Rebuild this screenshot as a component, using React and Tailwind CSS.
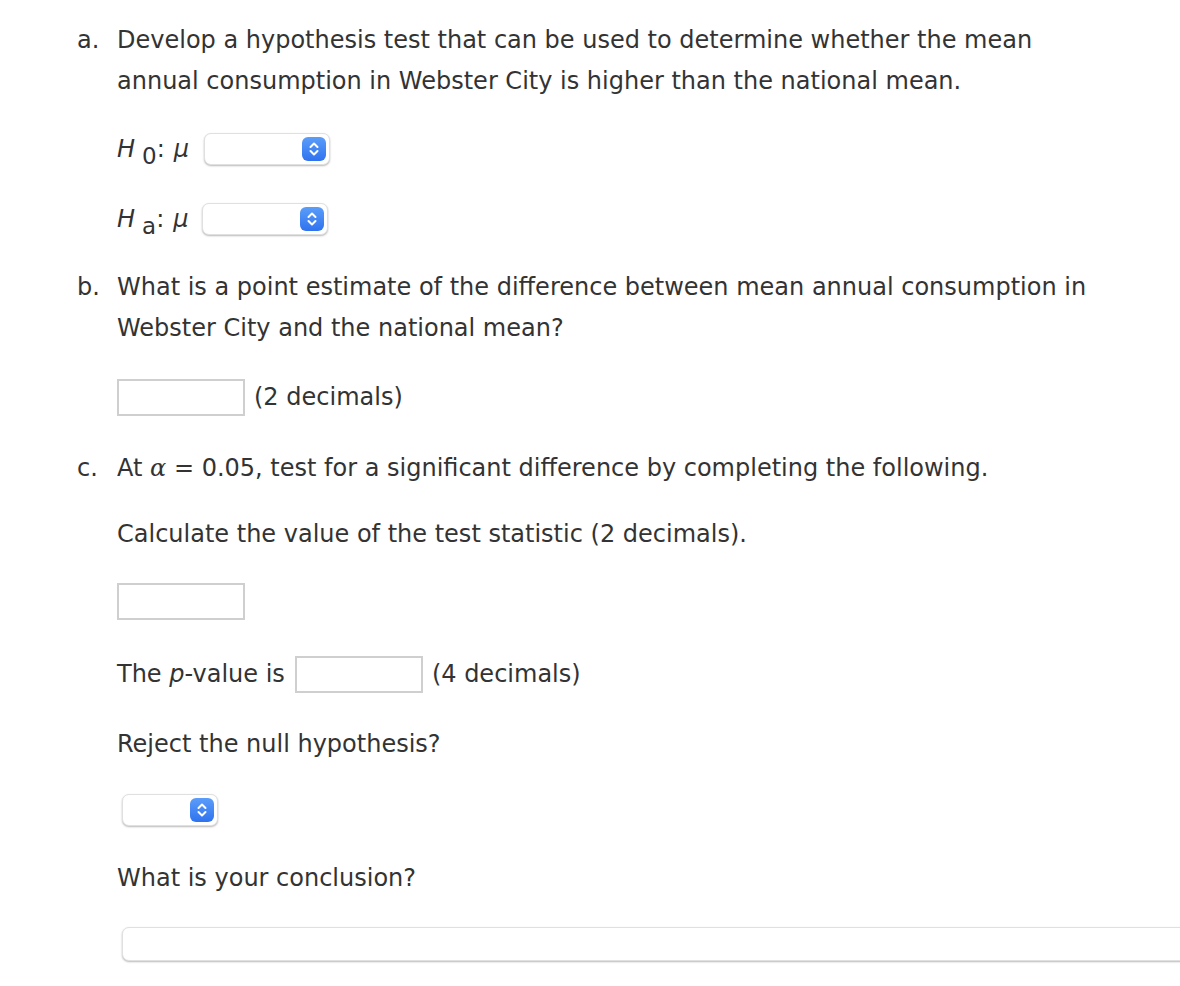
const Stepper = () => (
  <span className="absolute right-[3px] top-1/2 -translate-y-1/2 w-[24px] h-[24px] rounded-[6px] bg-gradient-to-b from-[#5b9df9] to-[#2f72ef] flex items-center justify-center">
    <svg width="12" height="16" viewBox="0 0 12 16" fill="none">
      <path d="M2.5 6 L6 2.5 L9.5 6" stroke="white" strokeWidth="2" strokeLinecap="round" strokeLinejoin="round" />
      <path d="M2.5 10 L6 13.5 L9.5 10" stroke="white" strokeWidth="2" strokeLinecap="round" strokeLinejoin="round" />
    </svg>
  </span>
);

const Select = ({ className = "" }) => (
  <div
    className={`relative h-[32px] rounded-[7px] bg-white border border-[#e0e0e0] shadow-[0_1px_2px_rgba(0,0,0,0.28)] ${className}`}
  >
    <Stepper />
  </div>
);

const Input = ({ className = "" }) => (
  <div className={`w-[128px] h-[37px] border-2 border-[#cfcfcf] bg-white ${className}`} />
);

const Item = ({ label, children, className = "" }) => (
  <div className={`grid grid-cols-[40px_1fr] ${className}`}>
    <span>{label}</span>
    <div>{children}</div>
  </div>
);

export default function App() {
  return (
    <div
      className="min-h-[986px] w-[1180px] overflow-hidden bg-white text-[#333] text-[24px] leading-[41px] pl-[77px] pt-[20px]"
      style={{ fontFamily: "'DejaVu Sans', Verdana, sans-serif" }}
    >
      <Item label="a.">
        <p className="w-[960px]">
          Develop a hypothesis test that can be used to determine whether the mean annual
          consumption in Webster City is higher than the national mean.
        </p>
      </Item>

      <div className="pl-[40px]">
        <div className="mt-[31px] flex items-center h-[32px]">
          <span className="italic">H</span>
          <span className="text-[23px] relative top-[7px] ml-[7px]">0</span>
          <span>:</span>
          <span className="italic ml-[9px]">μ</span>
          <Select className="w-[126px] ml-[15px]" />
        </div>
        <div className="mt-[38px] flex items-center h-[32px]">
          <span className="italic">H</span>
          <span className="text-[23px] relative top-[7px] ml-[7px]">a</span>
          <span>:</span>
          <span className="italic ml-[9px]">μ</span>
          <Select className="w-[126px] ml-[13px]" />
        </div>
      </div>

      <Item label="b." className="mt-[32px]">
        <p className="w-[1000px]">
          What is a point estimate of the difference between mean annual consumption in Webster
          City and the national mean?
        </p>
      </Item>

      <div className="pl-[40px] mt-[28px] flex items-center">
        <Input />
        <span className="ml-[9px]">(2 decimals)</span>
      </div>

      <Item label="c." className="mt-[30px]">
        <p>
          At <span className="italic" style={{ fontFamily: "'DejaVu Serif', serif" }}>α</span> = 0.05, test for a significant difference by completing the following.
        </p>
      </Item>

      <div className="pl-[40px]">
        <p className="mt-[25px]">Calculate the value of the test statistic (2 decimals).</p>
        <Input className="mt-[28px]" />

        <div className="mt-[34px] flex items-center">
          <span>
            The <span className="italic">p</span>-value is
          </span>
          <Input className="ml-[10px]" />
          <span className="ml-[9px]">(4 decimals)</span>
        </div>

        <p className="mt-[29px]">Reject the null hypothesis?</p>
        <Select className="w-[96px] ml-[5px] mt-[29px]" />

        <p className="mt-[32px]">What is your conclusion?</p>
        <Select className="w-[1100px] ml-[5px] mt-[28px] h-[34px]" />
      </div>
    </div>
  );
}
